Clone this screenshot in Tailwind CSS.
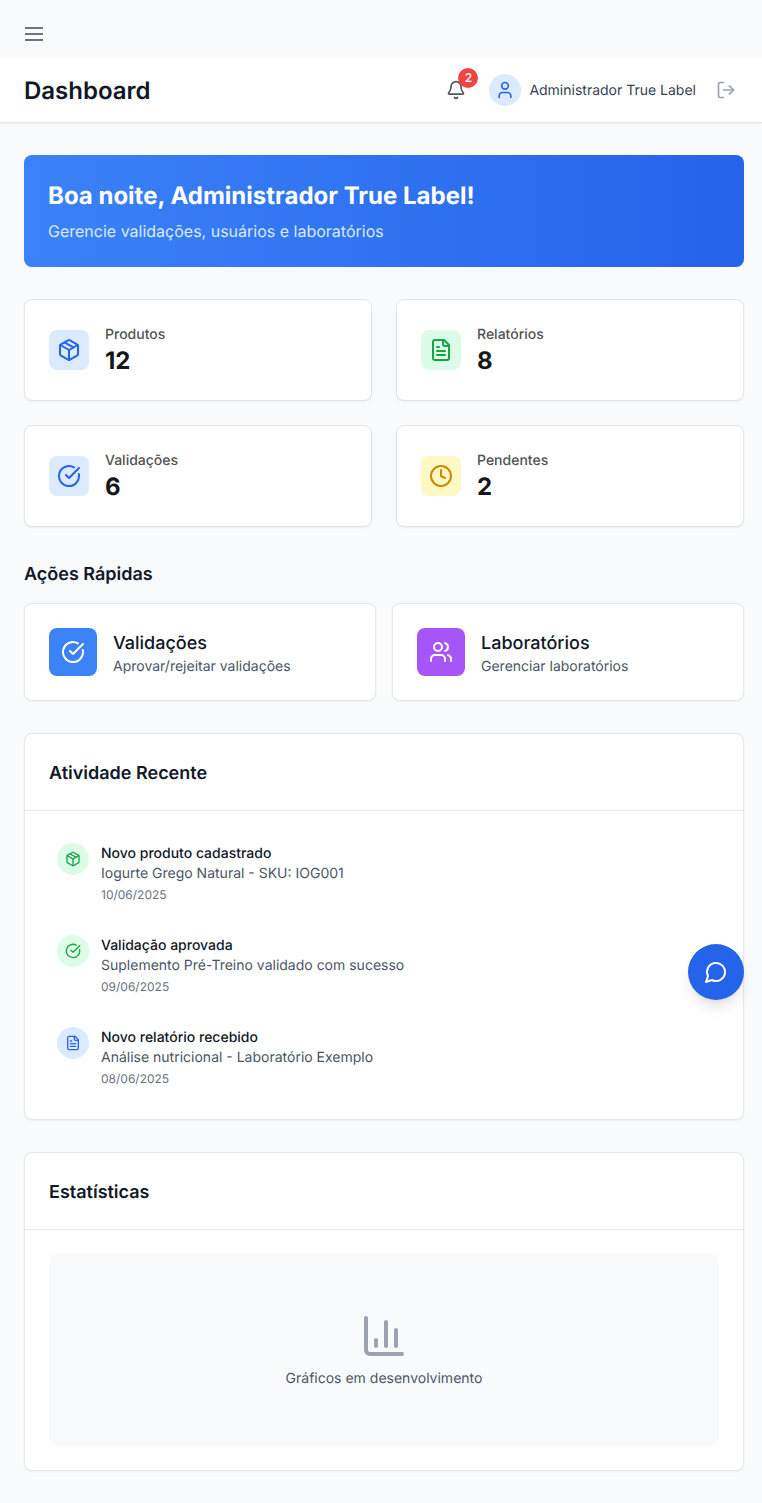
<!DOCTYPE html>
<html lang="pt-BR">
<head>
  <meta charset="UTF-8" />
  <meta name="viewport" content="width=device-width, initial-scale=1.0" />
  <title>Dashboard</title>
  <script src="https://cdn.jsdelivr.net/npm/@tailwindcss/browser@4"></script>
</head>
<body class="min-h-screen bg-[#f9fafb] font-['Inter',sans-serif] text-[#171717] [text-rendering:geometricPrecision]">

  <!-- barra do menu -->
  <div class="h-[57px] pl-[22px] pt-[22px]">
    <button class="block text-[#6b7280]">
      <svg class="w-6 h-6" viewBox="0 0 24 24" fill="none" stroke="currentColor" stroke-width="2"><path d="M3 6h18M3 12h18M3 18h18"/></svg>
    </button>
  </div>

  <header class="h-[66px] bg-white border-b border-[#e5e7eb] shadow-[0_1px_2px_0_rgb(0_0_0/0.05)] flex items-center justify-between pl-6 pr-[26px]">
    <h1 class="text-2xl font-semibold text-[#111827] translate-y-px">Dashboard</h1>
    <div class="flex items-center">
      <button class="relative text-[#4b5563] mr-[23px]">
        <svg class="w-5 h-5" viewBox="0 0 24 24" fill="none" stroke="currentColor" stroke-width="2" stroke-linecap="round" stroke-linejoin="round"><path d="M10.268 21a2 2 0 0 0 3.464 0"/><path d="M3.262 15.326A1 1 0 0 0 4 17h16a1 1 0 0 0 .74-1.673C19.41 13.956 18 12.499 18 8A6 6 0 0 0 6 8c0 4.499-1.411 5.956-2.738 7.326"/></svg>
        <span class="absolute -top-3 -right-3 w-5 h-5 rounded-full bg-[#ef4444] text-white text-xs font-medium flex items-center justify-center">2</span>
      </button>
      <div class="flex items-center gap-2">
        <div class="w-8 h-8 rounded-full bg-[#dbeafe] flex items-center justify-center text-[#2563eb]">
          <svg class="w-5 h-5" viewBox="0 0 24 24" fill="none" stroke="currentColor" stroke-width="2" stroke-linecap="round" stroke-linejoin="round"><path d="M19 21v-2a4 4 0 0 0-4-4H9a4 4 0 0 0-4 4v2"/><circle cx="12" cy="7" r="4"/></svg>
        </div>
        <span class="text-sm text-[#374151] translate-y-px">Administrador True Label</span>
      </div>
      <button class="ml-5 text-[#9ca3af]">
        <svg class="w-5 h-5" viewBox="0 0 24 24" fill="none" stroke="currentColor" stroke-width="2" stroke-linecap="round" stroke-linejoin="round"><path d="M9 21H5a2 2 0 0 1-2-2V5a2 2 0 0 1 2-2h4"/><polyline points="16 17 21 12 16 7"/><line x1="21" y1="12" x2="9" y2="12"/></svg>
      </button>
    </div>
  </header>

  <main class="pl-6 pr-[18px] pt-8 pb-8">
    <section class="rounded-lg bg-gradient-to-r from-[#3b82f6] to-[#2563eb] p-6 text-white">
      <h2 class="text-2xl font-bold translate-y-px">Boa noite, Administrador True Label!</h2>
      <p class="mt-2 text-[#dbeafe]">Gerencie validações, usuários e laboratórios</p>
    </section>

    <section class="grid grid-cols-2 gap-6 mt-8">
      <div class="flex items-center bg-white border border-[#e5e5e5] rounded-lg shadow-[0_1px_2px_0_rgb(0_0_0/0.05)] p-6">
        <div class="w-10 h-10 rounded-lg bg-[#dbeafe] text-[#2563eb] flex items-center justify-center">
          <svg class="w-6 h-6" viewBox="0 0 24 24" fill="none" stroke="currentColor" stroke-width="2" stroke-linecap="round" stroke-linejoin="round"><path d="M11 21.73a2 2 0 0 0 2 0l7-4A2 2 0 0 0 21 16V8a2 2 0 0 0-1-1.73l-7-4a2 2 0 0 0-2 0l-7 4A2 2 0 0 0 3 8v8a2 2 0 0 0 1 1.73z"/><path d="M12 22V12"/><polyline points="3.29 7 12 12 20.71 7"/><path d="m7.5 4.27 9 5.15"/></svg>
        </div>
        <div class="ml-4">
          <p class="text-sm font-medium text-[#525252] translate-y-px">Produtos</p>
          <p class="text-2xl font-bold translate-y-px">12</p>
        </div>
      </div>
      <div class="flex items-center bg-white border border-[#e5e5e5] rounded-lg shadow-[0_1px_2px_0_rgb(0_0_0/0.05)] p-6">
        <div class="w-10 h-10 rounded-lg bg-[#dcfce7] text-[#16a34a] flex items-center justify-center">
          <svg class="w-6 h-6" viewBox="0 0 24 24" fill="none" stroke="currentColor" stroke-width="2" stroke-linecap="round" stroke-linejoin="round"><path d="M15 2H6a2 2 0 0 0-2 2v16a2 2 0 0 0 2 2h12a2 2 0 0 0 2-2V7Z"/><path d="M14 2v4a2 2 0 0 0 2 2h4"/><path d="M10 9H8"/><path d="M16 13H8"/><path d="M16 17H8"/></svg>
        </div>
        <div class="ml-4">
          <p class="text-sm font-medium text-[#525252] translate-y-px">Relatórios</p>
          <p class="text-2xl font-bold translate-y-px">8</p>
        </div>
      </div>
      <div class="flex items-center bg-white border border-[#e5e5e5] rounded-lg shadow-[0_1px_2px_0_rgb(0_0_0/0.05)] p-6">
        <div class="w-10 h-10 rounded-lg bg-[#dbeafe] text-[#2563eb] flex items-center justify-center">
          <svg class="w-6 h-6" viewBox="0 0 24 24" fill="none" stroke="currentColor" stroke-width="2" stroke-linecap="round" stroke-linejoin="round"><path d="M21.801 10A10 10 0 1 1 17 3.335"/><path d="m9 11 3 3L22 4"/></svg>
        </div>
        <div class="ml-4">
          <p class="text-sm font-medium text-[#525252] translate-y-px">Validações</p>
          <p class="text-2xl font-bold translate-y-px">6</p>
        </div>
      </div>
      <div class="flex items-center bg-white border border-[#e5e5e5] rounded-lg shadow-[0_1px_2px_0_rgb(0_0_0/0.05)] p-6">
        <div class="w-10 h-10 rounded-lg bg-[#fef9c3] text-[#ca8a04] flex items-center justify-center">
          <svg class="w-6 h-6" viewBox="0 0 24 24" fill="none" stroke="currentColor" stroke-width="2" stroke-linecap="round" stroke-linejoin="round"><circle cx="12" cy="12" r="10"/><polyline points="12 6 12 12 16 14"/></svg>
        </div>
        <div class="ml-4">
          <p class="text-sm font-medium text-[#525252] translate-y-px">Pendentes</p>
          <p class="text-2xl font-bold translate-y-px">2</p>
        </div>
      </div>
    </section>

    <section class="mt-8">
      <h2 class="text-lg font-semibold text-[#111827] mb-4 translate-y-[2px]">Ações Rápidas</h2>
      <div class="grid grid-cols-2 gap-4">
        <a class="flex items-center bg-white border border-[#e5e7eb] rounded-lg shadow-[0_1px_2px_0_rgb(0_0_0/0.05)] p-6">
          <div class="w-12 h-12 rounded-lg bg-[#3b82f6] text-white flex items-center justify-center mr-4">
            <svg class="w-6 h-6" viewBox="0 0 24 24" fill="none" stroke="currentColor" stroke-width="2" stroke-linecap="round" stroke-linejoin="round"><path d="M21.801 10A10 10 0 1 1 17 3.335"/><path d="m9 11 3 3L22 4"/></svg>
          </div>
          <div>
            <h3 class="text-lg font-medium text-[#111827] translate-y-[2px]">Validações</h3>
            <p class="text-sm text-[#4b5563] translate-y-px">Aprovar/rejeitar validações</p>
          </div>
        </a>
        <a class="flex items-center bg-white border border-[#e5e7eb] rounded-lg shadow-[0_1px_2px_0_rgb(0_0_0/0.05)] p-6">
          <div class="w-12 h-12 rounded-lg bg-[#a855f7] text-white flex items-center justify-center mr-4">
            <svg class="w-6 h-6" viewBox="0 0 24 24" fill="none" stroke="currentColor" stroke-width="2" stroke-linecap="round" stroke-linejoin="round"><path d="M16 21v-2a4 4 0 0 0-4-4H6a4 4 0 0 0-4 4v2"/><circle cx="9" cy="7" r="4"/><path d="M22 21v-2a4 4 0 0 0-3-3.87"/><path d="M16 3.13a4 4 0 0 1 0 7.75"/></svg>
          </div>
          <div>
            <h3 class="text-lg font-medium text-[#111827] translate-y-[2px]">Laboratórios</h3>
            <p class="text-sm text-[#4b5563] translate-y-px">Gerenciar laboratórios</p>
          </div>
        </a>
      </div>
    </section>

    <section class="mt-8 bg-white border border-[#e5e7eb] rounded-lg shadow-[0_1px_2px_0_rgb(0_0_0/0.05)]">
      <div class="p-6 border-b border-[#e5e7eb]">
        <h2 class="text-lg font-semibold text-[#111827] translate-y-[2px]">Atividade Recente</h2>
      </div>
      <div class="p-6 space-y-4">
        <div class="flex items-start gap-3 p-2">
          <div class="w-8 h-8 rounded-full bg-[#dcfce7] text-[#16a34a] flex items-center justify-center shrink-0">
            <svg class="w-4 h-4" viewBox="0 0 24 24" fill="none" stroke="currentColor" stroke-width="2" stroke-linecap="round" stroke-linejoin="round"><path d="M11 21.73a2 2 0 0 0 2 0l7-4A2 2 0 0 0 21 16V8a2 2 0 0 0-1-1.73l-7-4a2 2 0 0 0-2 0l-7 4A2 2 0 0 0 3 8v8a2 2 0 0 0 1 1.73z"/><path d="M12 22V12"/><polyline points="3.29 7 12 12 20.71 7"/><path d="m7.5 4.27 9 5.15"/></svg>
          </div>
          <div>
            <p class="text-sm font-medium text-[#111827] translate-y-px">Novo produto cadastrado</p>
            <p class="text-sm text-[#4b5563] translate-y-px">Iogurte Grego Natural - SKU: IOG001</p>
            <p class="text-xs text-[#6b7280] mt-1">10/06/2025</p>
          </div>
        </div>
        <div class="flex items-start gap-3 p-2">
          <div class="w-8 h-8 rounded-full bg-[#dcfce7] text-[#16a34a] flex items-center justify-center shrink-0">
            <svg class="w-4 h-4" viewBox="0 0 24 24" fill="none" stroke="currentColor" stroke-width="2" stroke-linecap="round" stroke-linejoin="round"><path d="M21.801 10A10 10 0 1 1 17 3.335"/><path d="m9 11 3 3L22 4"/></svg>
          </div>
          <div>
            <p class="text-sm font-medium text-[#111827] translate-y-px">Validação aprovada</p>
            <p class="text-sm text-[#4b5563] translate-y-px">Suplemento Pré-Treino validado com sucesso</p>
            <p class="text-xs text-[#6b7280] mt-1">09/06/2025</p>
          </div>
        </div>
        <div class="flex items-start gap-3 p-2">
          <div class="w-8 h-8 rounded-full bg-[#dbeafe] text-[#2563eb] flex items-center justify-center shrink-0">
            <svg class="w-4 h-4" viewBox="0 0 24 24" fill="none" stroke="currentColor" stroke-width="2" stroke-linecap="round" stroke-linejoin="round"><path d="M15 2H6a2 2 0 0 0-2 2v16a2 2 0 0 0 2 2h12a2 2 0 0 0 2-2V7Z"/><path d="M14 2v4a2 2 0 0 0 2 2h4"/><path d="M10 9H8"/><path d="M16 13H8"/><path d="M16 17H8"/></svg>
          </div>
          <div>
            <p class="text-sm font-medium text-[#111827] translate-y-px">Novo relatório recebido</p>
            <p class="text-sm text-[#4b5563] translate-y-px">Análise nutricional - Laboratório Exemplo</p>
            <p class="text-xs text-[#6b7280] mt-1">08/06/2025</p>
          </div>
        </div>
      </div>
    </section>

    <section class="mt-8 bg-white border border-[#e5e7eb] rounded-lg shadow-[0_1px_2px_0_rgb(0_0_0/0.05)]">
      <div class="p-6 border-b border-[#e5e7eb]">
        <h2 class="text-lg font-semibold text-[#111827] translate-y-[2px]">Estatísticas</h2>
      </div>
      <div class="p-6">
        <div class="h-48 rounded-lg bg-[#f9fafb] flex flex-col items-center justify-center">
          <svg class="w-12 h-12 mb-2 text-[#9ca3af]" viewBox="0 0 24 24" fill="none" stroke="currentColor" stroke-width="2" stroke-linecap="round" stroke-linejoin="round"><path d="M3 3v16a2 2 0 0 0 2 2h16"/><path d="M18 17V9"/><path d="M13 17V5"/><path d="M8 17v-3"/></svg>
          <p class="text-sm text-[#4b5563] translate-y-px">Gráficos em desenvolvimento</p>
        </div>
      </div>
    </section>
  </main>

  <!-- botão flutuante do chat -->
  <button class="absolute top-[944px] right-[18px] w-14 h-14 rounded-full bg-[#2563eb] text-white shadow-lg flex items-center justify-center">
    <svg class="w-6 h-6" viewBox="0 0 24 24" fill="none" stroke="currentColor" stroke-width="2" stroke-linecap="round" stroke-linejoin="round"><path d="M7.9 20A9 9 0 1 0 4 16.1L2 22Z"/></svg>
  </button>
</body>
</html>
